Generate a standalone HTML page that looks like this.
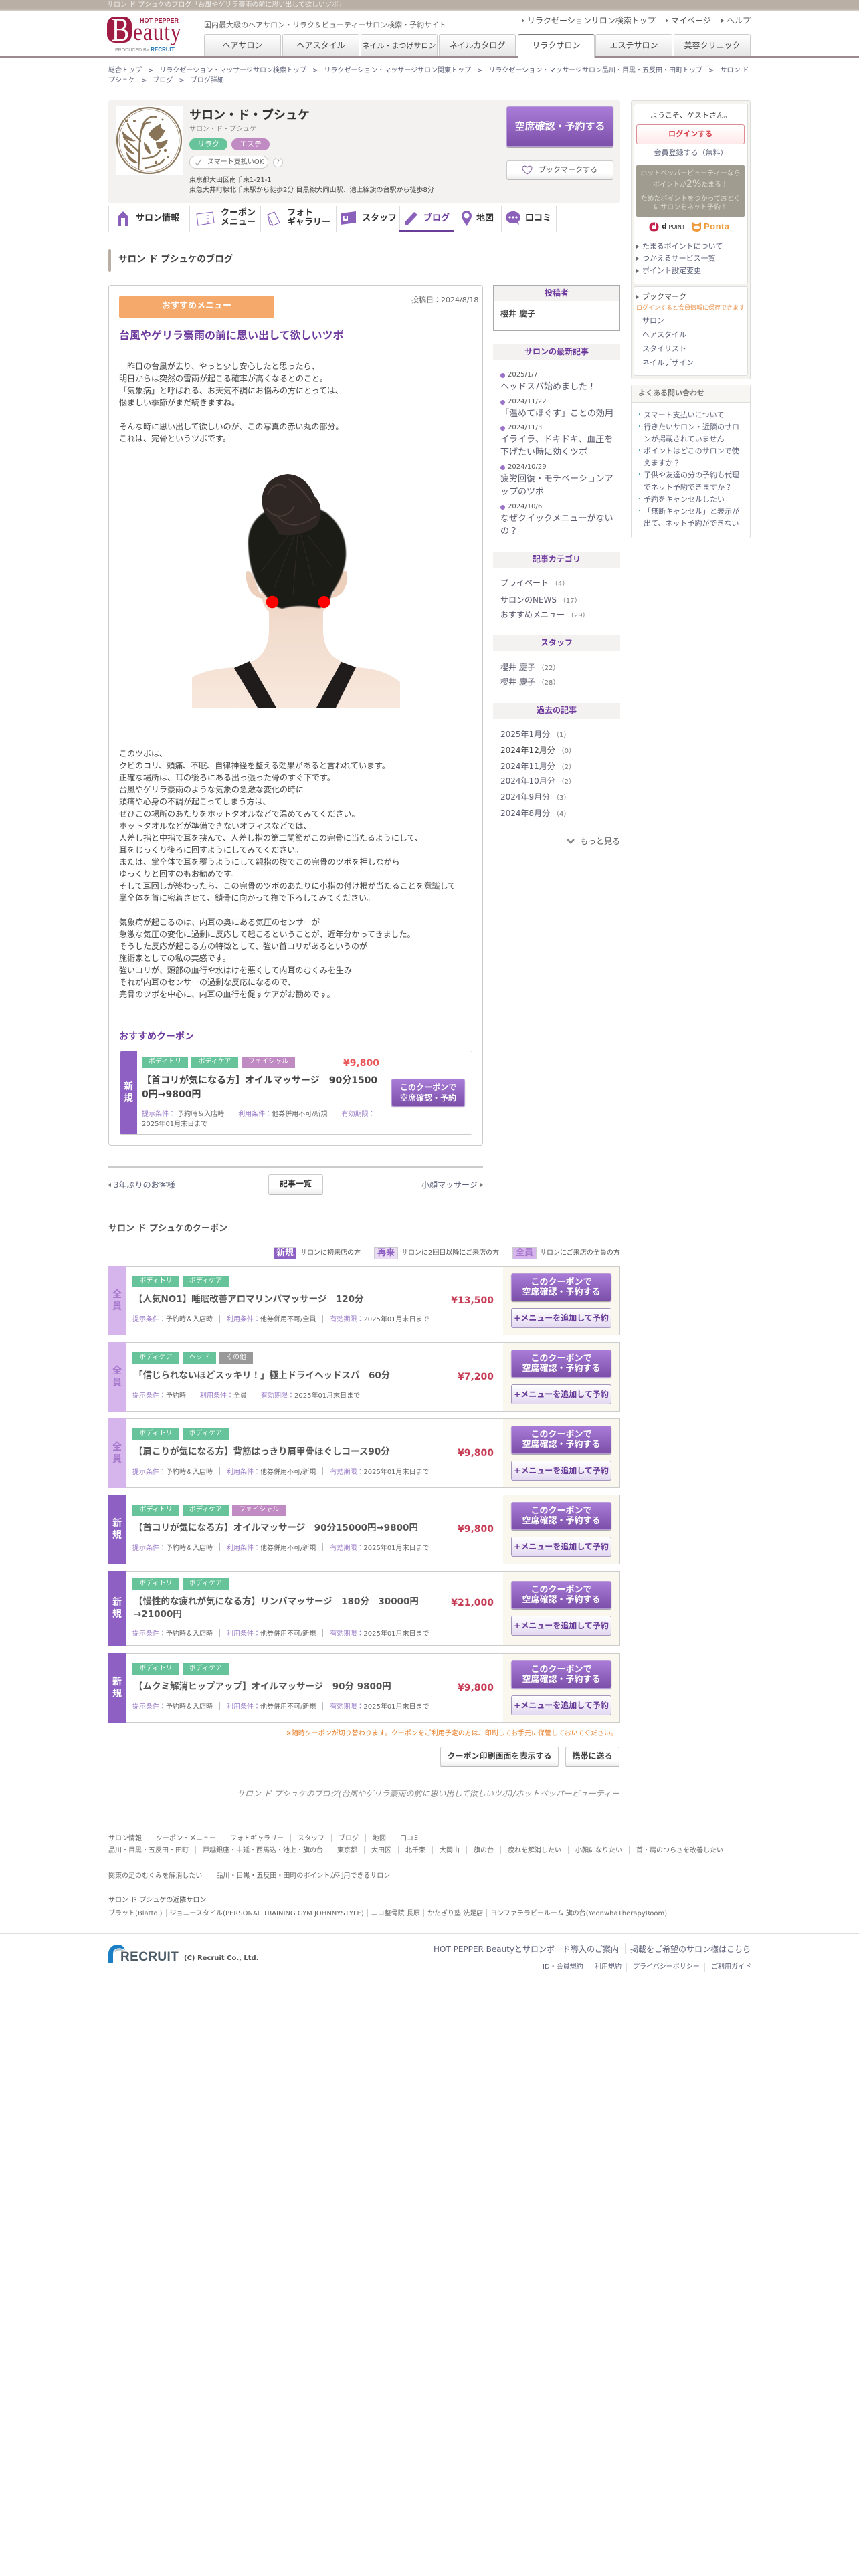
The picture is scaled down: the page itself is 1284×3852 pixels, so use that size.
<!DOCTYPE html>
<html lang="ja"><head><meta charset="utf-8"><title>サロン ド プシュケのブログ</title>
<style>
*{box-sizing:border-box;margin:0;padding:0}
html,body{width:1284px;height:3852px;background:#fff;overflow:hidden}
body{position:relative;font-family:"DejaVu Sans","Noto Sans CJK JP",sans-serif;font-size:12px;color:#555}
.a{position:absolute}
.t{position:absolute;line-height:18px;white-space:nowrap}
.tab{position:absolute;top:51px;width:115px;height:33px;border:1px solid #ccc;border-bottom:0;border-radius:3px 3px 0 0;background:linear-gradient(#fff,#e6e6e6);text-align:center;line-height:33px;font-size:12px;color:#444;white-space:nowrap}
.b{font-weight:bold}
.pbtn{position:absolute;background:linear-gradient(#a97cd8,#7c4fa9);border:1px solid #b79ad6;border-radius:3px;color:#fff;font-weight:bold;text-align:center;box-shadow:0 1px 1px #999;white-space:nowrap}
.wbtn{position:absolute;background:linear-gradient(#fff 70%,#eee);border:1px solid #ccc;border-bottom:2px solid #bbb;border-radius:3px;text-align:center;font-weight:bold;color:#444}
.sh{position:absolute;left:737px;width:190px;height:24px;background:#f3f2f0;color:#6f3a9e;font-weight:bold;text-align:center;line-height:23px;font-size:12px}
.nav{position:absolute;top:308px;height:39px;border-left:1px solid #ddd}
.n{position:absolute;font-size:13px;font-weight:bold;color:#333;line-height:14px;white-space:nowrap}
.c{position:absolute;left:162px;width:765px;border:1px solid #ccc;background:#fff}
.st{position:absolute;left:-1px;top:-1px;bottom:-1px;width:26px;display:flex;align-items:center;justify-content:center;text-align:center;color:#fff;font-weight:bold;font-size:14px;line-height:18px}
.z{background:#d6b5ec;color:#a678cc}.sn{background:#8e60c4}
.rp{position:absolute;left:589px;top:0;bottom:0;right:0;background:#faf7ee}
.tg{position:absolute;height:17px;line-height:16px;color:#fff;font-size:10px;text-align:center}
.g{background:#66c39a}.p{background:#c08bc2}.y{background:#999}
.ti{position:absolute;left:37px;font-size:13.5px;font-weight:bold;color:#555;line-height:19px;white-space:nowrap}
.co{position:absolute;left:35px;font-size:10px;line-height:14px;color:#666;white-space:nowrap}
.co i,.ci{font-style:normal;color:#9a7cc8}
.co u,.cu{display:inline-block;width:1px;height:12px;background:#bbb;margin:0 10px;vertical-align:-2px;text-decoration:none}
.pr{position:absolute;right:188px;color:#c73c55;font-weight:bold;font-size:14px;line-height:18px}
.b1{left:601px;width:150px;height:42px;font-size:13px;line-height:15px;padding-top:5px}
.b2{position:absolute;left:601px;width:150px;height:30px;border:1px solid #a596bd;border-radius:3px;background:linear-gradient(#fff,#e3d8f1);color:#6a3d9a;font-weight:bold;font-size:12px;line-height:28px;text-align:center;white-space:nowrap}
.tri{position:absolute;width:0;height:0;border-left:4px solid #666;border-top:3.5px solid transparent;border-bottom:3.5px solid transparent}
.dot{position:absolute;left:748px;width:7px;height:7px;border-radius:50%;background:#9a72c9}
.m{color:#5a5a6e}
.m13{color:#5a5a6e;font-size:13px}
.ln{color:#5b5f78}
.s{font-size:11px}
small{font-size:10px;color:#777}
.f{font-size:10px;color:#666}
.f u{display:inline-block;width:1px;height:12px;background:#ccc;margin:0 10px;vertical-align:-2px}
.f b{display:inline-block;width:1px;height:12px;background:#ccc;margin:0 5px;vertical-align:-2px}
.bc span{margin:0 9px}
</style></head><body>

<div class="a" style="left:0;top:0;width:1284px;height:17px;background:linear-gradient(#b9afa5 80%,#e4dfda)"></div>
<div class="t" style="left:160px;top:-1px;font-size:10px;color:#f2efec">サロン ド プシュケのブログ「台風やゲリラ豪雨の前に思い出して欲しいツボ」</div>

<!-- logo -->
<div class="a" style="left:160px;top:25px;width:37px;height:39px;background:#a01c44;border-radius:12px"></div>
<div class="a" style="left:160px;top:19px;width:40px;line-height:50px;font-family:'Liberation Serif',serif;font-size:50px;color:#fff;text-align:center;transform:scaleX(.8)">B</div>
<div class="a" style="left:199px;top:30px;font-family:'Liberation Serif',serif;font-size:37px;line-height:37px;color:#a01c44;transform:scaleX(.85);transform-origin:0 0;letter-spacing:1px">eauty</div>
<div class="a" style="left:209px;top:26px;font-family:'Liberation Sans',sans-serif;font-size:10px;line-height:12px;font-weight:bold;color:#a01c44;transform:scaleX(.9);transform-origin:0 0;white-space:nowrap">HOT PEPPER</div>
<div class="a" style="left:172px;top:70px;font-family:'Liberation Sans',sans-serif;font-size:7px;line-height:10px;color:#888;white-space:nowrap">PRODUCED BY <span style="color:#1a6fb5;font-weight:bold;font-size:8px">RECRUIT</span></div>

<div class="t" style="left:305px;top:29px;font-size:11px;color:#666">国内最大級のヘアサロン・リラク＆ビューティーサロン検索・予約サイト</div>
<div class="tri" style="left:780px;top:28px"></div><div class="t" style="left:788px;top:22px;color:#555">リラクゼーションサロン検索トップ</div>
<div class="tri" style="left:995px;top:28px"></div><div class="t" style="left:1003px;top:22px;color:#555">マイページ</div>
<div class="tri" style="left:1078px;top:28px"></div><div class="t" style="left:1086px;top:22px;color:#555">ヘルプ</div>

<div class="a" style="left:0;top:84px;width:1284px;height:2px;background:#9a8a90"></div>
<div class="tab" style="left:305px">ヘアサロン</div>
<div class="tab" style="left:422px">ヘアスタイル</div>
<div class="tab" style="left:539px;font-size:11px">ネイル・まつげサロン</div>
<div class="tab" style="left:656px">ネイルカタログ</div>
<div class="tab" style="left:774px;height:35px;background:#fff;border-top:2px solid #777;line-height:31px">リラクサロン</div>
<div class="tab" style="left:890px">エステサロン</div>
<div class="tab" style="left:1007px">美容クリニック</div>

<div class="a ln bc" style="left:162px;top:98px;width:960px;font-size:10px;line-height:15px">総合トップ<span>&gt;</span>リラクゼーション・マッサージサロン検索トップ<span>&gt;</span>リラクゼーション・マッサージサロン関東トップ<span>&gt;</span>リラクゼーション・マッサージサロン品川・目黒・五反田・田町トップ<span>&gt;</span>サロン ド プシュケ<span>&gt;</span>ブログ<span>&gt;</span>ブログ詳細</div>

<!-- salon box -->
<div class="a" style="left:162px;top:150px;width:765px;height:153px;background:#f3f2f0;border-radius:3px"></div>
<svg class="a" style="left:173px;top:159px" width="100" height="102" viewBox="0 0 100 102">
<rect width="100" height="102" fill="#fff"/>
<ellipse cx="50" cy="51" rx="48" ry="49" fill="none" stroke="#8f7a60" stroke-width="2.2"/>
<ellipse cx="50" cy="51" rx="45" ry="46" fill="none" stroke="#8f7a60" stroke-width=".7"/>
<g fill="none" stroke="#8a7458" stroke-width="2.4" stroke-linecap="round">
<path d="M34 94C36 70 34 50 40 30C43 20 50 14 60 16"/>
<path d="M36 70C28 60 18 56 12 46"/>
<path d="M37 52C30 44 22 38 18 26"/>
<path d="M40 78C50 78 62 76 66 66"/>
<path d="M40 34C42 26 46 24 52 24"/>
<path d="M44 92C54 90 66 88 72 80"/>
</g>
<g fill="#8a7458">
<path d="M12 54C18 60 24 68 30 72C22 72 12 66 12 54Z"/><path d="M9 36C14 42 22 48 30 52C20 54 10 48 9 36Z"/>
<path d="M16 68C20 74 26 80 33 84C24 86 16 78 16 68Z"/><path d="M42 54C48 58 52 64 52 72C46 70 42 62 42 54Z"/>
<path d="M49 42C52 36 58 30 68 26C66 32 68 34 74 36C70 44 66 50 60 52C56 50 52 46 49 42Z"/>
<path d="M60 54C66 54 72 52 78 50C76 58 70 64 64 64C62 62 60 58 60 54Z"/>
<circle cx="28" cy="22" r="2"/><circle cx="16" cy="22" r="2"/><circle cx="74" cy="66" r="2.2"/><circle cx="78" cy="76" r="2"/><circle cx="60" cy="84" r="2.2"/><circle cx="70" cy="20" r="1.5"/>
</g></svg>
<div class="t b" style="left:283px;top:164px;font-size:18px;color:#333">サロン・ド・プシュケ</div>
<div class="t" style="left:283px;top:185px;font-size:10px;color:#888">サロン・ド・プシュケ</div>
<div class="a" style="left:283px;top:207px;width:57px;height:18px;border-radius:9px;background:#66c39a;color:#fff;font-size:11px;line-height:17px;text-align:center">リラク</div>
<div class="a" style="left:346px;top:207px;width:57px;height:18px;border-radius:9px;background:#c08bc2;color:#fff;font-size:11px;line-height:17px;text-align:center">エステ</div>
<div class="a" style="left:283px;top:233px;width:118px;height:19px;border:1px solid #ccc;border-radius:10px;background:#fff;font-size:10px;line-height:17px;color:#666;padding-left:26px;white-space:nowrap">スマート支払いOK</div>
<svg class="a" style="left:290px;top:237px" width="14" height="12"><path d="M2 6L5 10L11 1" fill="none" stroke="#999" stroke-width="1"/></svg>
<div class="a" style="left:408px;top:236px;width:15px;height:14px;border:1px solid #ccc;border-radius:50%;background:#fff;font-size:9px;line-height:12px;text-align:center;color:#777">?</div>
<div class="t" style="left:283px;top:261px;font-size:10px;color:#444">東京都大田区南千束1-21-1</div>
<div class="t" style="left:283px;top:276px;font-size:10px;color:#444">東急大井町線北千束駅から徒歩2分 目黒線大岡山駅、池上線旗の台駅から徒歩8分</div>
<div class="pbtn" style="left:757px;top:159px;width:160px;height:61px;font-size:15px;line-height:58px">空席確認・予約する</div>
<div class="wbtn" style="left:757px;top:240px;width:160px;height:29px;font-size:11px;line-height:26px;font-weight:normal;color:#555;padding-left:24px">ブックマークする</div>
<svg class="a" style="left:780px;top:246px" width="16" height="16" viewBox="0 0 16 16"><path d="M8 14C2 10 1 7 1 5C1 2 5 1 8 4C11 1 15 2 15 5C15 7 14 10 8 14Z" fill="#fff" stroke="#7c5a9a" stroke-width="1"/></svg>

<!-- nav -->
<div class="nav" style="left:162px"></div><div class="nav" style="left:283px"></div><div class="nav" style="left:389px"></div><div class="nav" style="left:502px"></div><div class="nav" style="left:597px"></div><div class="nav" style="left:678px"></div><div class="nav" style="left:749px"></div><div class="nav" style="left:831px"></div>
<div class="a" style="left:597px;top:344px;width:81px;height:3px;background:#6a3d96"></div>
<svg class="a" style="left:176px;top:316px" width="16" height="22" viewBox="0 0 16 22"><path d="M8 0L16 8V22H11V10H5V22H0V8Z" fill="#8a60bb"/></svg>
<div class="n" style="left:203px;top:320px">サロン情報</div>
<svg class="a" style="left:293px;top:315px" width="28" height="24" viewBox="0 0 28 24"><path d="M1 5L25 2L27 18L3 22Z" fill="#fff" stroke="#8a60bb"/><path d="M18 6V18" stroke="#8a60bb" stroke-dasharray="2 3"/></svg>
<div class="n" style="left:330px;top:312px">クーポン<br>メニュー</div>
<svg class="a" style="left:398px;top:315px" width="22" height="24" viewBox="0 0 22 24"><path d="M2 6L12 2L20 18L10 22Z" fill="#fff" stroke="#8a60bb"/><path d="M2 6L5 20L10 22" fill="none" stroke="#8a60bb"/></svg>
<div class="n" style="left:429px;top:312px">フォト<br>ギャラリー</div>
<svg class="a" style="left:509px;top:316px" width="24" height="20" viewBox="0 0 24 20"><path d="M0 3L23 0V17L0 20Z" fill="#8a60bb"/><rect x="4" y="7" width="7" height="8" fill="#fff"/><circle cx="7.5" cy="9" r="2" fill="#8a60bb"/></svg>
<div class="n" style="left:541px;top:320px">スタッフ</div>
<svg class="a" style="left:604px;top:316px" width="22" height="22" viewBox="0 0 22 22"><path d="M15 1L20 5L6 20L1 21L2 15Z" fill="#8a60bb"/></svg>
<div class="n" style="left:633px;top:320px;color:#7040a0">ブログ</div>
<svg class="a" style="left:690px;top:315px" width="15" height="23" viewBox="0 0 15 23"><path d="M7.5 23C3 15 0 12 0 7.5A7.5 7.5 0 0 1 15 7.5C15 12 12 15 7.5 23Z" fill="#8a60bb"/><circle cx="7.5" cy="7.5" r="4" fill="#fff"/></svg>
<div class="n" style="left:712px;top:320px">地図</div>
<svg class="a" style="left:756px;top:316px" width="22" height="20" viewBox="0 0 22 20"><ellipse cx="11" cy="9" rx="11" ry="9" fill="#8a60bb"/><path d="M14 16L20 20L18 13Z" fill="#8a60bb"/><circle cx="6" cy="9" r="1.6" fill="#fff"/><circle cx="11" cy="9" r="1.6" fill="#fff"/><circle cx="16" cy="9" r="1.6" fill="#fff"/></svg>
<div class="n" style="left:785px;top:320px">口コミ</div>

<div class="a" style="left:162px;top:373px;width:4px;height:33px;background:#b9afa5;border-radius:2px"></div>
<div class="t b" style="left:177px;top:379px;font-size:13.5px;color:#444">サロン ド プシュケのブログ</div>

<!-- article -->
<div class="a" style="left:162px;top:426px;width:560px;height:1287px;border:1px solid #ccc;border-radius:4px"></div>
<div class="a" style="left:178px;top:442px;width:232px;height:34px;background:#f5a96b;border-radius:3px;color:#fff;font-weight:bold;font-size:13px;line-height:32px;text-align:center">おすすめメニュー</div>
<div class="t" style="left:615px;top:440px;font-size:11px;color:#666">投稿日：2024/8/18</div>
<div class="t b" style="left:178px;top:493px;font-size:16px;color:#6f3a9e">台風やゲリラ豪雨の前に思い出して欲しいツボ</div>
<div class="a" style="left:178px;top:539px;font-size:12px;line-height:18px;color:#444;white-space:nowrap">一昨日の台風が去り、やっと少し安心したと思ったら、<br>明日からは突然の雷雨が起こる確率が高くなるとのこと。<br>「気象病」と呼ばれる、お天気不調にお悩みの方にとっては、<br>悩ましい季節がまだ続きますね。<br><br>そんな時に思い出して欲しいのが、この写真の赤い丸の部分。<br>これは、完骨というツボです。</div>

<svg class="a" style="left:280px;top:680px" width="340" height="400" viewBox="0 0 340 400">
<defs><linearGradient id="sk" x1="0" y1="0" x2="0" y2="1"><stop offset="0" stop-color="#f0d9c9"/><stop offset="1" stop-color="#f8e8dd"/></linearGradient>
<filter id="bl"><feGaussianBlur stdDeviation=".8"/></filter></defs>
<path d="M7 378L7 333Q30 320 72 318L95 310Q122 298 122 262L122 225L203 225L203 262Q203 298 232 310L252 318Q295 320 318 340L318 378Z" fill="url(#sk)"/>
<path d="M70 319L93 309L133 378L105 378Z" fill="#211c1c"/><path d="M230 310L252 318L222 378L193 378Z" fill="#211c1c"/>
<path d="M110 205C112 235 128 245 162 245C196 245 212 235 216 205Z" fill="#f0d9c9"/>
<path d="M88 175C92 172 96 176 100 185C104 198 110 212 116 214C110 216 98 212 92 200C88 190 86 180 88 175Z" fill="#ecd0bc"/>
<path d="M238 175C234 172 230 176 226 185C222 198 218 208 214 214C222 214 232 208 236 198C240 190 240 180 238 175Z" fill="#ecd0bc"/>
<path d="M91 135C90 112 100 94 118 84C135 74 195 72 212 90C232 108 238 130 237 152C236 170 228 190 216 207C212 220 208 228 196 229C180 226 160 224 142 230C130 228 120 214 112 204C100 190 92 165 91 135Z" fill="#1f1a18" filter="url(#bl)"/>
<g stroke="#352d2a" stroke-width="1" opacity=".8"><path d="M160 120L130 200M165 120L158 210M170 120L190 200M150 122L110 175M180 120L218 170"/></g>
<path d="M112 72C110 50 122 32 150 29C170 30 184 44 190 62C202 72 202 92 194 105C182 118 150 124 136 118C130 100 112 92 112 72Z" fill="#2f2724"/>
<g fill="none" stroke="#54453e" stroke-width="2" opacity=".7"><path d="M120 60C126 44 140 40 148 50M150 36C165 44 178 60 186 72M135 92C150 110 170 108 192 92M118 80C130 96 150 96 160 76"/></g>
<circle cx="127" cy="220" r="9.3" fill="#f00"/><circle cx="204.5" cy="220" r="9" fill="#f00"/>
</svg>

<div class="a" style="left:178px;top:1118px;font-size:12px;line-height:18px;color:#444;white-space:nowrap">このツボは、<br>クビのコリ、頭痛、不眠、自律神経を整える効果があると言われています。<br>正確な場所は、耳の後ろにある出っ張った骨のすぐ下です。<br>台風やゲリラ豪雨のような気象の急激な変化の時に<br>頭痛や心身の不調が起こってしまう方は、<br>ぜひこの場所のあたりをホットタオルなどで温めてみてください。<br>ホットタオルなどが準備できないオフィスなどでは、<br>人差し指と中指で耳を挟んで、人差し指の第二関節がこの完骨に当たるようにして、<br>耳をじっくり後ろに回すようにしてみてください。<br>または、掌全体で耳を覆うようにして親指の腹でこの完骨のツボを押しながら<br>ゆっくりと回すのもお勧めです。<br>そして耳回しが終わったら、この完骨のツボのあたりに小指の付け根が当たることを意識して<br>掌全体を首に密着させて、鎖骨に向かって撫で下ろしてみてください。<br><br>気象病が起こるのは、内耳の奥にある気圧のセンサーが<br>急激な気圧の変化に過剰に反応して起こるということが、近年分かってきました。<br>そうした反応が起こる方の特徴として、強い首コリがあるというのが<br>施術家としての私の実感です。<br>強いコリが、頭部の血行や水はけを悪くして内耳のむくみを生み<br>それが内耳のセンサーの過剰な反応になるので、<br>完骨のツボを中心に、内耳の血行を促すケアがお勧めです。</div>

<div class="t b" style="left:178px;top:1541px;font-size:14px;color:#6f3a9e">おすすめクーポン</div>
<div class="a" style="left:179px;top:1571px;width:527px;height:126px;border:1px solid #ccc;border-radius:3px;overflow:hidden">
<div class="st sn" style="width:26px">新<br>規</div></div>
<div class="tg g" style="left:212px;top:1580px;width:69px">ボディトリ</div><div class="tg g" style="left:286px;top:1580px;width:70px">ボディケア</div><div class="tg p" style="left:361px;top:1580px;width:80px">フェイシャル</div>
<div class="t b" style="left:513px;top:1581px;font-size:14px;color:#e8585a">¥9,800</div>
<div class="a b" style="left:212px;top:1606px;width:358px;font-size:14px;line-height:21px;color:#444;white-space:nowrap">【首コリが気になる方】オイルマッサージ　90分1500<br>0円→9800円</div>
<div class="a" style="left:212px;top:1659px;width:365px;font-size:10px;line-height:15px;color:#666"><span class="ci">提示条件：</span> 予約時＆入店時<span class="cu"></span><span class="ci">利用条件：</span>他券併用不可/新規<span class="cu"></span><span class="ci">有効期限：</span>2025年01月末日まで</div>
<div class="pbtn" style="left:585px;top:1613px;width:110px;height:42px;font-size:12px;line-height:16px;padding-top:4px">このクーポンで<br>空席確認・予約</div>

<div class="a" style="left:162px;top:1744px;width:560px;height:2px;background:#ccc"></div>
<div class="a" style="left:162px;top:1769px;width:0;height:0;border-right:4px solid #777;border-top:3.5px solid transparent;border-bottom:3.5px solid transparent"></div>
<div class="t ln" style="left:170px;top:1763px">3年ぶりのお客様</div>
<div class="wbtn" style="left:401px;top:1756px;width:82px;height:31px;font-size:12px;line-height:26px;color:#333">記事一覧</div>
<div class="t ln" style="left:630px;top:1763px">小顔マッサージ</div>
<div class="tri" style="left:718px;top:1769px;border-left-color:#777"></div>

<!-- mid sidebar -->
<div class="a" style="left:737px;top:426px;width:190px;height:69px;border:1px solid #aaa"></div>
<div class="a" style="left:738px;top:427px;width:188px;height:23px;background:#f3f2f0;color:#6f3a9e;font-weight:bold;text-align:center;line-height:22px">投稿者</div>
<div class="t b" style="left:748px;top:460px;color:#444">櫻井 慶子</div>
<div class="sh" style="top:515px">サロンの最新記事</div>
<div class="dot" style="top:558px"></div><div class="t" style="left:759px;top:552px;font-size:10px;color:#555">2025/1/7</div>
<div class="t m13" style="left:748px;top:570px">ヘッドスパ始めました！</div>
<div class="dot" style="top:598px"></div><div class="t" style="left:759px;top:592px;font-size:10px;color:#555">2024/11/22</div>
<div class="t m13" style="left:748px;top:610px">「温めてほぐす」ことの効用</div>
<div class="dot" style="top:637px"></div><div class="t" style="left:759px;top:631px;font-size:10px;color:#555">2024/11/3</div>
<div class="a m13" style="left:748px;top:648px;line-height:19px;white-space:nowrap">イライラ、ドキドキ、血圧を<br>下げたい時に効くツボ</div>
<div class="dot" style="top:696px"></div><div class="t" style="left:759px;top:690px;font-size:10px;color:#555">2024/10/29</div>
<div class="a m13" style="left:748px;top:707px;line-height:19px;white-space:nowrap">疲労回復・モチベーションア<br>ップのツボ</div>
<div class="dot" style="top:755px"></div><div class="t" style="left:759px;top:749px;font-size:10px;color:#555">2024/10/6</div>
<div class="a m13" style="left:748px;top:766px;line-height:19px;white-space:nowrap">なぜクイックメニューがない<br>の？</div>

<div class="sh" style="top:825px">記事カテゴリ</div>
<div class="t m" style="left:748px;top:863px">プライベート <small>（4）</small></div>
<div class="t m" style="left:748px;top:888px">サロンのNEWS <small>（17）</small></div>
<div class="t m" style="left:748px;top:910px">おすすめメニュー <small>（29）</small></div>
<div class="sh" style="top:950px">スタッフ</div>
<div class="t m" style="left:748px;top:989px">櫻井 慶子 <small>（22）</small></div>
<div class="t m" style="left:748px;top:1011px">櫻井 慶子 <small>（28）</small></div>
<div class="sh" style="top:1051px">過去の記事</div>
<div class="t m" style="left:748px;top:1089px">2025年1月分 <small>（1）</small></div>
<div class="t" style="left:748px;top:1113px;color:#444">2024年12月分 <small>（0）</small></div>
<div class="t m" style="left:748px;top:1137px">2024年11月分 <small>（2）</small></div>
<div class="t m" style="left:748px;top:1159px">2024年10月分 <small>（2）</small></div>
<div class="t m" style="left:748px;top:1183px">2024年9月分 <small>（3）</small></div>
<div class="t m" style="left:748px;top:1207px">2024年8月分 <small>（4）</small></div>
<div class="a" style="left:737px;top:1239px;width:190px;height:1px;background:#ccc"></div>
<svg class="a" style="left:847px;top:1254px" width="12" height="9"><path d="M1 1L6 6L11 1" fill="none" stroke="#888" stroke-width="2.6"/></svg>
<div class="t" style="left:867px;top:1249px;color:#555">もっと見る</div>

<!-- right sidebar -->
<div class="a" style="left:943px;top:150px;width:179px;height:417px;background:#f5f3ee;border:1px solid #ddd;border-radius:3px"></div>
<div class="a" style="left:947px;top:155px;width:171px;height:270px;background:#fff;border:1px solid #ddd;border-radius:3px"></div>
<div class="a" style="left:947px;top:428px;width:171px;height:134px;background:#fff;border:1px solid #ddd;border-radius:3px"></div>
<div class="a s" style="left:947px;top:164px;width:171px;text-align:center;line-height:18px;color:#444">ようこそ、ゲストさん。</div>
<div class="a s" style="left:951px;top:186px;width:162px;height:30px;background:linear-gradient(#fff,#ffe9ea);border:1px solid #dd8d93;border-radius:3px;color:#d8404a;font-weight:bold;text-align:center;line-height:27px">ログインする</div>
<div class="a ln s" style="left:947px;top:220px;width:171px;text-align:center;line-height:18px">会員登録する（無料）</div>
<div class="a" style="left:951px;top:247px;width:162px;height:77px;background:#a09d90;border-radius:2px;color:#dedcd2;font-size:10px;text-align:center;line-height:13px;padding-top:6px;white-space:nowrap">ホットペッパービューティーなら<br><span style="line-height:19px">ポイントが<span style="font-size:14px">2%</span>たまる！</span><br><span style="display:block;height:5px"></span>ためたポイントをつかっておとく<br>にサロンをネット予約！</div>
<svg class="a" style="left:970px;top:332px" width="15" height="15" viewBox="0 0 15 15"><circle cx="7.5" cy="7.5" r="7" fill="#c4214d"/><circle cx="7" cy="8" r="3" fill="#fff"/><rect x="9" y="2" width="2" height="8" fill="#fff"/></svg>
<div class="t" style="left:989px;top:330px;font-size:8px;color:#333"><b style="font-size:11px">d</b> POINT</div>
<svg class="a" style="left:1034px;top:331px" width="15" height="16" viewBox="0 0 15 16"><path d="M1 1L5 4H10L14 1L14 11C14 14 11 16 7.5 16C4 16 1 14 1 11Z" fill="#ef9a3a"/><ellipse cx="7.5" cy="9" rx="5" ry="2.4" fill="#fff"/></svg>
<div class="t b" style="left:1052px;top:330px;font-size:13px;color:#ef9a3a;letter-spacing:.5px;font-family:'Liberation Sans',sans-serif">Ponta</div>
<div class="tri" style="left:951px;top:366px"></div><div class="t ln s" style="left:960px;top:360px">たまるポイントについて</div>
<div class="tri" style="left:951px;top:384px"></div><div class="t ln s" style="left:960px;top:378px">つかえるサービス一覧</div>
<div class="tri" style="left:951px;top:402px"></div><div class="t ln s" style="left:960px;top:396px">ポイント設定変更</div>
<div class="tri" style="left:951px;top:441px"></div><div class="t s" style="left:960px;top:435px;color:#444">ブックマーク</div>
<div class="t" style="left:951px;top:452px;font-size:9px;color:#e8924e">ログインすると会員情報に保存できます</div>
<div class="t ln s" style="left:960px;top:471px">サロン</div><div class="t ln s" style="left:960px;top:492px">ヘアスタイル</div><div class="t ln s" style="left:960px;top:513px">スタイリスト</div><div class="t ln s" style="left:960px;top:534px">ネイルデザイン</div>

<div class="a" style="left:943px;top:575px;width:179px;height:230px;border:1px solid #ddd;border-radius:3px;background:#fff"></div>
<div class="a s" style="left:944px;top:576px;width:177px;height:26px;background:#f8f6f2;border-bottom:1px solid #ddd;padding-left:10px;line-height:24px;font-weight:bold;color:#777">よくある問い合わせ</div>
<div class="a ln s" style="left:962px;top:612px;line-height:18px;white-space:nowrap">スマート支払いについて<br>行きたいサロン・近隣のサロ<br>ンが掲載されていません<br>ポイントはどこのサロンで使<br>えますか？<br>子供や友達の分の予約も代理<br>でネット予約できますか？<br>予約をキャンセルしたい<br>「無断キャンセル」と表示が<br>出て、ネット予約ができない</div>
<div class="a" style="left:951px;top:612px;color:#3a9a9a;font-size:10px;line-height:18px">・<br>・<br><br>・<br><br>・<br><br>・<br>・</div>

<!-- coupons -->
<div class="a" style="left:162px;top:1818px;width:765px;height:1px;background:#ccc"></div>
<div class="t b" style="left:162px;top:1829px;font-size:13px;color:#555">サロン ド プシュケのクーポン</div>
<div class="a" style="left:409px;top:1865px;width:34px;height:18px;background:#8e60c4;color:#fff;font-weight:bold;font-size:13px;text-align:center;line-height:16px;border:1px solid #ccc">新規</div>
<div class="t" style="left:449px;top:1865px;font-size:10px;color:#555">サロンに初来店の方</div>
<div class="a" style="left:559px;top:1865px;width:36px;height:18px;background:#eadcf2;color:#8e60c4;font-weight:bold;font-size:13px;text-align:center;line-height:16px;border:1px solid #ccc">再来</div>
<div class="t" style="left:600px;top:1865px;font-size:10px;color:#555">サロンに2回目以降にご来店の方</div>
<div class="a" style="left:766px;top:1865px;width:36px;height:18px;background:#d6b5ec;color:#a678cc;font-weight:bold;font-size:13px;text-align:center;line-height:16px;border:1px solid #ccc">全員</div>
<div class="t" style="left:807px;top:1865px;font-size:10px;color:#555">サロンにご来店の全員の方</div>

<!-- card 1 -->
<div class="c" style="top:1893px;height:104px"><div class="st z">全<br>員</div><div class="rp"></div>
<div class="tg g" style="left:35px;top:14px;width:70px">ボディトリ</div><div class="tg g" style="left:110px;top:14px;width:69px">ボディケア</div>
<div class="ti" style="top:40px">【人気NO1】睡眠改善アロマリンパマッサージ　120分</div>
<div class="pr" style="top:42px">¥13,500</div>
<div class="co" style="top:72px"><i>提示条件：</i>予約時＆入店時<u></u><i>利用条件：</i>他券併用不可/全員<u></u><i>有効期限：</i>2025年01月末日まで</div>
<div class="pbtn b1" style="top:10px">このクーポンで<br>空席確認・予約する</div><div class="b2" style="top:62px">+メニューを追加して予約</div></div>
<!-- card 2 -->
<div class="c" style="top:2007px;height:104px"><div class="st z">全<br>員</div><div class="rp"></div>
<div class="tg g" style="left:35px;top:14px;width:70px">ボディケア</div><div class="tg g" style="left:110px;top:14px;width:50px">ヘッド</div><div class="tg y" style="left:165px;top:14px;width:50px">その他</div>
<div class="ti" style="top:40px">「信じられないほどスッキリ！」極上ドライヘッドスパ　60分</div>
<div class="pr" style="top:42px">¥7,200</div>
<div class="co" style="top:72px"><i>提示条件：</i>予約時<u></u><i>利用条件：</i>全員<u></u><i>有効期限：</i>2025年01月末日まで</div>
<div class="pbtn b1" style="top:10px">このクーポンで<br>空席確認・予約する</div><div class="b2" style="top:62px">+メニューを追加して予約</div></div>
<!-- card 3 -->
<div class="c" style="top:2121px;height:104px"><div class="st z">全<br>員</div><div class="rp"></div>
<div class="tg g" style="left:35px;top:14px;width:70px">ボディトリ</div><div class="tg g" style="left:110px;top:14px;width:69px">ボディケア</div>
<div class="ti" style="top:40px">【肩こりが気になる方】背筋はっきり肩甲骨ほぐしコース90分</div>
<div class="pr" style="top:42px">¥9,800</div>
<div class="co" style="top:72px"><i>提示条件：</i>予約時＆入店時<u></u><i>利用条件：</i>他券併用不可/新規<u></u><i>有効期限：</i>2025年01月末日まで</div>
<div class="pbtn b1" style="top:10px">このクーポンで<br>空席確認・予約する</div><div class="b2" style="top:62px">+メニューを追加して予約</div></div>
<!-- card 4 -->
<div class="c" style="top:2235px;height:104px"><div class="st sn">新<br>規</div><div class="rp"></div>
<div class="tg g" style="left:35px;top:14px;width:70px">ボディトリ</div><div class="tg g" style="left:110px;top:14px;width:69px">ボディケア</div><div class="tg p" style="left:184px;top:14px;width:80px">フェイシャル</div>
<div class="ti" style="top:40px">【首コリが気になる方】オイルマッサージ　90分15000円→9800円</div>
<div class="pr" style="top:42px">¥9,800</div>
<div class="co" style="top:72px"><i>提示条件：</i>予約時＆入店時<u></u><i>利用条件：</i>他券併用不可/新規<u></u><i>有効期限：</i>2025年01月末日まで</div>
<div class="pbtn b1" style="top:10px">このクーポンで<br>空席確認・予約する</div><div class="b2" style="top:62px">+メニューを追加して予約</div></div>
<!-- card 5 -->
<div class="c" style="top:2349px;height:112px"><div class="st sn">新<br>規</div><div class="rp"></div>
<div class="tg g" style="left:35px;top:10px;width:70px">ボディトリ</div><div class="tg g" style="left:110px;top:10px;width:69px">ボディケア</div>
<div class="ti" style="top:36px">【慢性的な疲れが気になる方】リンパマッサージ　180分　30000円<br>→21000円</div>
<div class="pr" style="top:38px">¥21,000</div>
<div class="co" style="top:86px"><i>提示条件：</i>予約時＆入店時<u></u><i>利用条件：</i>他券併用不可/新規<u></u><i>有効期限：</i>2025年01月末日まで</div>
<div class="pbtn b1" style="top:14px">このクーポンで<br>空席確認・予約する</div><div class="b2" style="top:66px">+メニューを追加して予約</div></div>
<!-- card 6 -->
<div class="c" style="top:2472px;height:104px"><div class="st sn">新<br>規</div><div class="rp"></div>
<div class="tg g" style="left:35px;top:14px;width:70px">ボディトリ</div><div class="tg g" style="left:110px;top:14px;width:69px">ボディケア</div>
<div class="ti" style="top:40px">【ムクミ解消ヒップアップ】オイルマッサージ　90分 9800円</div>
<div class="pr" style="top:42px">¥9,800</div>
<div class="co" style="top:72px"><i>提示条件：</i>予約時＆入店時<u></u><i>利用条件：</i>他券併用不可/新規<u></u><i>有効期限：</i>2025年01月末日まで</div>
<div class="pbtn b1" style="top:10px">このクーポンで<br>空席確認・予約する</div><div class="b2" style="top:62px">+メニューを追加して予約</div></div>

<div class="t" style="right:361px;top:2584px;font-size:10px;color:#e8812e">※随時クーポンが切り替わります。クーポンをご利用予定の方は、印刷してお手元に保管しておいてください。</div>
<div class="wbtn" style="left:658px;top:2612px;width:177px;height:31px;font-size:12px;line-height:27px;white-space:nowrap">クーポン印刷画面を表示する</div>
<div class="wbtn" style="left:845px;top:2612px;width:81px;height:31px;font-size:12px;line-height:27px">携帯に送る</div>
<div class="t" style="right:358px;top:2673px;font-size:12px;font-style:italic;color:#888">サロン ド プシュケのブログ(台風やゲリラ豪雨の前に思い出して欲しいツボ)/ホットペッパービューティー</div>

<!-- footer -->
<div class="t f" style="left:162px;top:2741px">サロン情報<u></u>クーポン・メニュー<u></u>フォトギャラリー<u></u>スタッフ<u></u>ブログ<u></u>地図<u></u>口コミ</div>
<div class="t f" style="left:162px;top:2759px">品川・目黒・五反田・田町<u></u>戸越銀座・中延・西馬込・池上・旗の台<u></u>東京都<u></u>大田区<u></u>北千束<u></u>大岡山<u></u>旗の台<u></u>疲れを解消したい<u></u>小顔になりたい<u></u>首・肩のつらさを改善したい</div>
<div class="t f" style="left:162px;top:2797px">関東の足のむくみを解消したい<u></u>品川・目黒・五反田・田町のポイントが利用できるサロン</div>
<div class="t f" style="left:162px;top:2833px;color:#555">サロン ド プシュケの近隣サロン</div>
<div class="t f" style="left:162px;top:2853px">ブラット(Blatto.)<b></b>ジョニースタイル(PERSONAL TRAINING GYM JOHNNYSTYLE)<b></b>ニコ整骨院 長原<b></b>かたぎり塾 洗足店<b></b>ヨンファテラピールーム 旗の台(YeonwhaTherapyRoom)</div>
<div class="a" style="left:0;top:2891px;width:1284px;height:1px;background:#ddd"></div>
<svg class="a" style="left:162px;top:2908px" width="26" height="28" viewBox="0 0 26 28"><path d="M0 27V14C0 5 7 0 14 0C20 0 23 3 25 8C20 5 13 4 9 8C7 10 7 13 7 16V27Z" fill="#1a7fc4"/><path d="M9 9C13 5 19 6 24 9L24 10C19 8 13 8 10 11Z" fill="#bcc4c8"/></svg>
<div class="a b" style="left:180px;top:2917px;font-family:'Liberation Sans',sans-serif;font-size:19px;line-height:20px;color:#4c5c66;letter-spacing:.4px">RECRUIT</div>
<div class="t b" style="left:275px;top:2920px;font-size:10px;color:#555">(C) Recruit Co., Ltd.</div>
<div class="t ln" style="left:648px;top:2906px">HOT PEPPER Beautyとサロンボード導入のご案内</div>
<div class="a" style="left:934px;top:2906px;width:1px;height:16px;background:#ddd"></div>
<div class="t ln" style="left:942px;top:2906px">掲載をご希望のサロン様はこちら</div>
<div class="t ln" style="left:811px;top:2933px;font-size:10px">ID・会員規約</div><div class="a" style="left:880px;top:2935px;width:1px;height:14px;background:#ddd"></div>
<div class="t ln" style="left:889px;top:2933px;font-size:10px">利用規約</div><div class="a" style="left:936px;top:2935px;width:1px;height:14px;background:#ddd"></div>
<div class="t ln" style="left:946px;top:2933px;font-size:10px">プライバシーポリシー</div><div class="a" style="left:1053px;top:2935px;width:1px;height:14px;background:#ddd"></div>
<div class="t ln" style="left:1063px;top:2933px;font-size:10px">ご利用ガイド</div>
</body></html>
